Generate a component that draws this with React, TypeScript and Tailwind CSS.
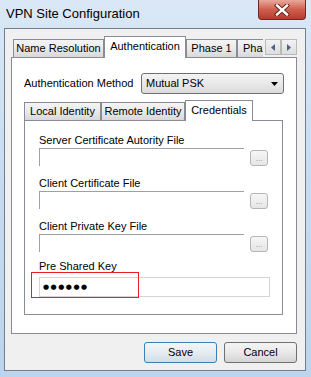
export default function App() {
  const tab =
    "flex items-center justify-center h-[18px] border border-b-0 border-[#898c95] bg-gradient-to-b from-[#f4f4f4] via-[#eaeaea] to-[#d8d8d8] whitespace-nowrap";
  const selTab =
    "relative z-10 -mb-px flex items-center justify-center border border-b-0 border-[#898c95] bg-white whitespace-nowrap";
  const browse =
    "ml-[6px] mt-[2px] w-[18px] h-[16px] rounded-[3px] border border-[#b5b5b5] bg-gradient-to-b from-[#f6f6f6] to-[#e6e6e6] flex items-end justify-center pb-[2px] text-[8px] leading-[8px] text-[#8a8a8a]";

  return (
    <div className="w-[311px] h-[377px] flex flex-col bg-gradient-to-b from-[#dae8f6] via-[#c6dbf0] to-[#bcd4ec] font-['Liberation_Sans',Arial,sans-serif] text-[11px] leading-[13px] text-black">
      {/* title bar */}
      <div className="h-[28px] flex items-start shrink-0">
        <div className="pl-[6px] pt-[6px] text-[13px] leading-[16px]">VPN Site Configuration</div>
        <div className="ml-auto mr-[5px] w-[48px] h-[20px] rounded-b-[4px] border border-t-0 border-[#6b2a22] bg-gradient-to-b from-[#e9a99b] via-[#cf5e4f] to-[#b83a2c] flex items-center justify-center">
          <svg width="16" height="12" viewBox="0 0 16 12">
            <path d="M3 1.5 L13 10.5 M13 1.5 L3 10.5" stroke="#5a1f18" strokeWidth="4.2" strokeLinecap="square" />
            <path d="M3 1.5 L13 10.5 M13 1.5 L3 10.5" stroke="#ffffff" strokeWidth="2.4" strokeLinecap="square" />
          </svg>
        </div>
      </div>

      {/* client area */}
      <div className="flex-1 ml-[4px] mr-[5px] mb-[6px] border border-[#6f7f8f] bg-[#f0f0f0] flex flex-col pt-[7px] pl-[6px] pr-[8px]">
        {/* outer tab strip */}
        <div className="flex items-end h-[21px] pl-[2px]">
          <div className={`${tab} w-[91px]`}>Name Resolution</div>
          <div className={`${selTab} w-[82px] h-[22px] pb-[2px]`}>Authentication</div>
          <div className={`${tab} w-[51px]`}>Phase 1</div>
          <div className="w-[26px] h-[18px] border-t border-l border-[#898c95] bg-gradient-to-b from-[#f4f4f4] via-[#eaeaea] to-[#d8d8d8] flex items-center pl-[5px] whitespace-nowrap">
            Pha
          </div>
          <div className="ml-[2px] mb-[2px] flex">
            <div className="w-[16px] h-[16px] border border-[#b9b9b9] bg-gradient-to-b from-[#f2f2f2] to-[#dedede] flex items-center justify-center">
              <svg width="4" height="7" viewBox="0 0 4 7">
                <path d="M4 0 L0 3.5 L4 7 Z" fill="#4d6185" />
              </svg>
            </div>
            <div className="w-[16px] h-[16px] border border-[#b9b9b9] bg-gradient-to-b from-[#f2f2f2] to-[#dedede] flex items-center justify-center">
              <svg width="4" height="7" viewBox="0 0 4 7">
                <path d="M0 0 L4 3.5 L0 7 Z" fill="#4d6185" />
              </svg>
            </div>
          </div>
        </div>

        {/* outer panel */}
        <div className="h-[277px] border border-[#898c95] bg-white flex flex-col">
          <div className="flex items-center pt-[15px] pl-[12px]">
            <span className="w-[117px]">Authentication Method</span>
            <div className="w-[143px] h-[21px] rounded-[3px] border border-[#707070] bg-gradient-to-b from-[#f3f3f3] via-[#e9e9e9] to-[#dadada] flex items-center pl-[4px] pr-[5px]">
              <span className="flex-1">Mutual PSK</span>
              <svg width="7" height="4" viewBox="0 0 7 4">
                <path d="M0 0 L7 0 L3.5 4 Z" fill="#000" />
              </svg>
            </div>
          </div>

          {/* inner tabs */}
          <div className="mt-[6px] ml-[12px] w-[259px] flex flex-col">
            <div className="flex items-end h-[20px]">
              <div className={`${tab} w-[77px]`}>Local Identity</div>
              <div className={`${tab} w-[84px]`}>Remote Identity</div>
              <div className={`${selTab} w-[68px] h-[21px] pb-[1px]`}>Credentials</div>
            </div>
            <div className="relative h-[195px] border border-[#898c95] bg-white flex flex-col pt-[13px] px-[14px]">
              <div>Server Certificate Autority File</div>
              <div className="flex mt-[1px]">
                <div className="w-[206px] h-[18px] border-t border-l border-[#a0a0a0]" />
                <div className={browse}>...</div>
              </div>

              <div className="mt-[11px]">Client Certificate File</div>
              <div className="flex mt-[1px]">
                <div className="w-[206px] h-[18px] border-t border-l border-[#a0a0a0]" />
                <div className={browse}>...</div>
              </div>

              <div className="mt-[11px]">Client Private Key File</div>
              <div className="flex mt-[1px]">
                <div className="w-[206px] h-[18px] border-t border-l border-[#a0a0a0]" />
                <div className={browse}>...</div>
              </div>

              <div className="mt-[8px]">Pre Shared Key</div>
              <div className="mt-[4px] w-[231px] h-[20px] border border-[#d5d5d5] flex items-center pl-[3px] font-['DejaVu_Sans',sans-serif] text-[7px] tracking-[1.5px]">
                ●●●●●●
              </div>

              <div className="absolute left-[6px] top-[151px] w-[108px] h-[26px] border border-[#ec1c24]" />
            </div>
          </div>
        </div>

        {/* buttons */}
        <div className="mt-[8px] flex justify-end gap-[7px]">
          <div className="w-[73px] h-[21px] rounded-[3px] border border-[#3c7fb1] bg-gradient-to-b from-[#f3f6f9] via-[#e6ecf1] to-[#d3dde6] flex items-center justify-center">
            Save
          </div>
          <div className="w-[73px] h-[21px] rounded-[3px] border border-[#707070] bg-gradient-to-b from-[#f4f4f4] via-[#e9e9e9] to-[#d4d4d4] flex items-center justify-center">
            Cancel
          </div>
        </div>
      </div>
    </div>
  );
}
